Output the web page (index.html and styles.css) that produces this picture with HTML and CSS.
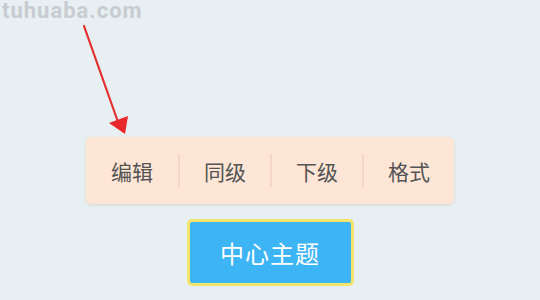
FILE: index.html
```html
<!DOCTYPE html>
<html lang="zh">
<head>
<meta charset="utf-8">
<link rel="stylesheet" href="styles.css">
</head>
<body>
<div class="watermark">tuhuaba.com</div>
<svg class="arrow" width="540" height="300" viewBox="0 0 540 300">
  <line x1="84" y1="26" x2="118" y2="122" stroke="#e3302f" stroke-width="2.2" stroke-linecap="round"/>
  <polygon points="125,134 109,123 128,116" fill="#e8282a"/>
</svg>
<main class="stage">
  <div class="toolbar">
    <div class="item">编辑</div>
    <div class="item">同级</div>
    <div class="item">下级</div>
    <div class="item">格式</div>
  </div>
  <div class="topic">中心主题</div>
</main>
</body>
</html>
```
FILE: styles.css
```css
html, body {
  margin: 0;
  padding: 0;
}
body {
  width: 540px;
  height: 300px;
  background: #e7eff2;
  overflow: hidden;
  position: relative;
  font-family: "Noto Sans CJK SC", "Noto Sans", sans-serif;
}
.watermark {
  position: absolute;
  left: 2px;
  top: 0;
  font-family: Roboto, "DejaVu Sans", sans-serif;
  font-weight: bold;
  font-size: 22px;
  line-height: 22px;
  letter-spacing: 1px;
  color: #c8ccd0;
}
.arrow {
  position: absolute;
  left: 0;
  top: 0;
}
.stage {
  display: flex;
  flex-direction: column;
  align-items: center;
  padding-top: 137px;
  gap: 15px;
}
.toolbar {
  display: grid;
  grid-template-columns: repeat(4, 92px);
  height: 67px;
  background: #fde6d6;
  border-radius: 5px;
  box-shadow: 0 1px 3px rgba(200, 170, 150, 0.35);
  align-items: center;
}
.item {
  height: 33px;
  display: flex;
  align-items: center;
  justify-content: center;
  font-size: 21px;
  color: #545454;
  border-left: 2px solid #f3d6c3;
}
.item:first-child {
  border-left: none;
}
.topic {
  width: 161px;
  height: 61px;
  background: #3db4f3;
  border: 3px solid #f3e46c;
  border-radius: 5px;
  color: #ffffff;
  font-size: 24px;
  display: flex;
  align-items: center;
  justify-content: center;
  letter-spacing: 1px;
}
```
